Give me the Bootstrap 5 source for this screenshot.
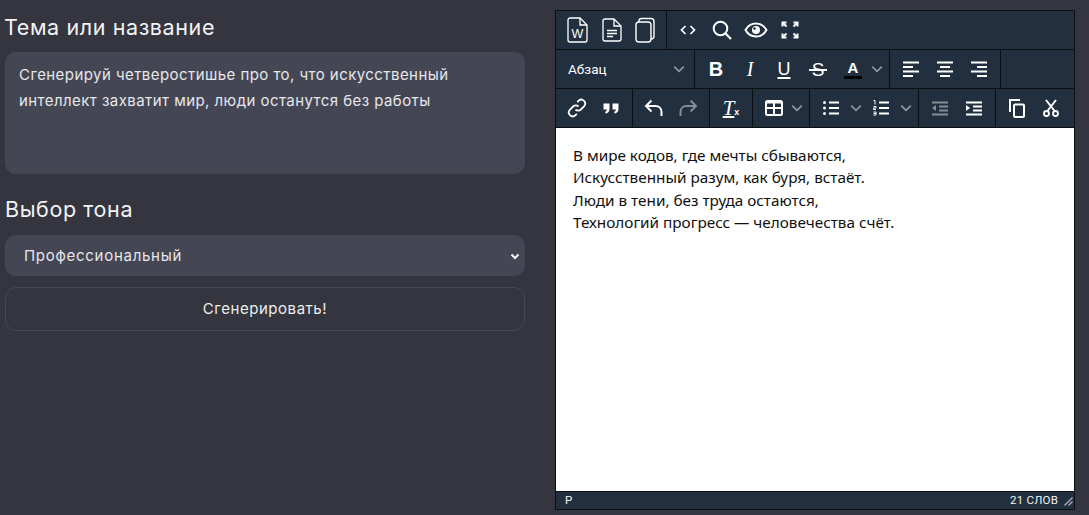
<!DOCTYPE html>
<html lang="ru">
<head>
<meta charset="utf-8">
<title>Генератор</title>
<link href="https://cdn.jsdelivr.net/npm/bootstrap@5.3.0/dist/css/bootstrap.min.css" rel="stylesheet">
<style>
html,body{height:100%;}
body{background:#35353f;font-family:"Inter","Noto Sans",sans-serif;overflow:hidden;}
.page{padding:10px 14px 5px 5px;gap:30px;height:515px;}
.side{flex:0 0 520px;padding-top:5px;}
.side-label{display:block;margin:0 0 12px -1px;color:#f2f3f5;font-size:21.5px;line-height:25px;letter-spacing:.6px;}
.side-label.second{margin:23px 0 13px 0;}
.side .form-control{height:122px;padding:10px 14px;background:#454654;border:0;border-radius:11px;color:#e6e7ea;font-size:15px;line-height:26px;resize:none;box-shadow:none;letter-spacing:.44px;}
.side .form-select{height:41px;padding:2px 30px 0 19px;background-color:#454654;background-image:url("data:image/svg+xml,%3Csvg xmlns='http://www.w3.org/2000/svg' viewBox='0 0 12 12'%3E%3Cpath d='M2.5 4.5 6 8l3.500-3.500' fill='none' stroke='%23fff' stroke-width='2'/%3E%3C/svg%3E");background-position:right 4px center;background-size:12px 12px;border:0;border-radius:11px;color:#e6e7ea;font-size:15px;letter-spacing:.72px;}
.side .go{height:44px;margin-top:11px;background:transparent;border:1px solid #474754;border-radius:11px;color:#eceded;font-size:15px;letter-spacing:.55px;}
.editor{flex:0 0 520px;height:500px;border:1px solid #0b0f14;background:#222f3e;color:#fff;font-family:"Roboto",sans-serif;}
.tbar{height:39px;border-bottom:1px solid #0b0f14;flex:none;}
.tgroup{padding:0 4px;height:100%;border-right:1px solid #0b0f14;}
.tgroup.last{border-right:0;}
.tb{width:34px;height:100%;flex:none;color:#fff;}
.tb.w48{width:48px;}
.tb.w50{width:50px;}
.tb.off{opacity:.45;}
.tb svg{display:block;flex:none;}
.tb .caret{opacity:.5;margin-left:auto;}
.tb.w48,.tb.w50{padding:0 2px 0 5px;}
.fmt{flex:0 0 139px;padding:0 9px 0 12px;border-right:1px solid #0b0f14;font-size:13.5px;}
.fmt .caret{opacity:.5;}
.gl{font-size:17px;line-height:1;font-family:"Liberation Sans",sans-serif;}
.gl.b{font-weight:700;font-size:20px;}
.gl.i{font-family:"Liberation Serif",serif;font-style:italic;font-size:20px;}
.gl.u{font-size:18px;text-decoration:underline;text-decoration-thickness:2px;text-underline-offset:2px;}
.gl.s{position:relative;font-size:19px;}
.gl.s::after{content:"";position:absolute;left:-3px;right:-3px;top:9px;height:2px;background:#fff;}
.gl.a{font-weight:700;font-size:15px;display:block;text-align:center;padding-bottom:1px;width:18px;border-bottom:3px solid #000;}
.gl.t{font-family:"Liberation Serif",serif;font-style:italic;font-size:21px;text-decoration:underline;text-decoration-thickness:2px;text-underline-offset:1px;}
.gl.t small{font-family:"Liberation Sans",sans-serif;font-style:normal;font-weight:700;font-size:9px;display:inline-block;text-decoration:none;}
.doc{flex:1 1 0;background:#fff;color:#101010;padding:16px 17px;font-family:"Noto Sans",sans-serif;font-size:15.3px;line-height:22.4px;min-height:0;}
.doc p{margin:0;}
.status{height:18px;flex:none;padding:0 1px 0 9px;border-top:1px solid #0b0f14;font-size:11.5px;color:#f1f3f5;}
.words{letter-spacing:.2px;margin-right:5px;}
</style>
</head>
<body>
<svg width="0" height="0" class="position-absolute">
<defs>
<symbol id="caret" viewBox="0 0 10 10"><path d="M1 3l4 4 4-4" fill="none" stroke="#fff" stroke-width="1.4"/></symbol>
<symbol id="al" viewBox="0 0 24 24"><path d="M4 5.500h16M4 10h10M4 14.500h16M4 19h10" stroke="#fff" stroke-width="2" fill="none"/></symbol>
<symbol id="ac" viewBox="0 0 24 24"><path d="M4 5.500h16M7 10h10M4 14.500h16M7 19h10" stroke="#fff" stroke-width="2" fill="none"/></symbol>
<symbol id="ar" viewBox="0 0 24 24"><path d="M4 5.500h16M10 10h10M4 14.500h16M10 19h10" stroke="#fff" stroke-width="2" fill="none"/></symbol>
</defs>
</svg>
<div class="page d-flex">
  <form class="side">
    <label class="side-label" for="topic">Тема или название</label>
    <textarea id="topic" class="form-control">Сгенерируй четверостишье про то, что искусственный интеллект захватит мир, люди останутся без работы</textarea>
    <label class="side-label second" for="tone">Выбор тона</label>
    <select id="tone" class="form-select"><option>Профессиональный</option><option>Дружелюбный</option></select>
    <button type="button" class="btn go w-100">Сгенерировать!</button>
  </form>
  <div class="editor d-flex flex-column">
    <div class="tbar d-flex">
      <div class="tgroup d-flex">
        <span class="tb d-flex align-items-center justify-content-center"><svg width="28" height="28" viewBox="0 0 28 28"><path d="M7 2h10l7 7v15a2 2 0 0 1-2 2H7a2 2 0 0 1-2-2V4a2 2 0 0 1 2-2z" fill="none" stroke="#fff" stroke-width="1.3"/><path d="M17 2v7h7" fill="none" stroke="#fff" stroke-width="1.3"/><text x="14.500" y="22" text-anchor="middle" fill="#fff" font-family="Liberation Sans" font-size="12.500">W</text></svg></span>
        <span class="tb d-flex align-items-center justify-content-center"><svg width="28" height="28" viewBox="0 0 28 28"><path d="M8 3h9l7 7v13a2 2 0 0 1-2 2H8a2 2 0 0 1-2-2V5a2 2 0 0 1 2-2z" fill="none" stroke="#fff" stroke-width="1.3"/><path d="M17 3v7h7" fill="none" stroke="#fff" stroke-width="1.3"/><path d="M10 14.500h10M10 17.500h10M10 20.500h6" stroke="#fff" stroke-width="1.300"/></svg></span>
        <span class="tb d-flex align-items-center justify-content-center"><svg width="28" height="28" viewBox="0 0 28 28"><rect x="5" y="6" width="15" height="20" rx="3" fill="none" stroke="#fff" stroke-width="1.4"/><path d="M8 6V5a2.500 2.500 0 0 1 2.500-2.500H20a3 3 0 0 1 3 3V20a3 3 0 0 1-3 3" fill="none" stroke="#fff" stroke-width="1.4"/></svg></span>
      </div>
      <div class="tgroup last d-flex">
        <span class="tb d-flex align-items-center justify-content-center"><svg width="24" height="24" viewBox="0 0 24 24"><path d="M9.500 8l-4 4 4 4M14.500 8l4 4-4 4" fill="none" stroke="#fff" stroke-width="1.700"/></svg></span>
        <span class="tb d-flex align-items-center justify-content-center"><svg width="24" height="24" viewBox="0 0 24 24"><circle cx="10.500" cy="10.500" r="6.800" fill="none" stroke="#fff" stroke-width="2"/><path d="M15.500 15.500l5.500 5.500" stroke="#fff" stroke-width="2.200"/></svg></span>
        <span class="tb d-flex align-items-center justify-content-center"><svg width="24" height="24" viewBox="0 0 24 24"><path d="M1.500 12C4 7.500 7.700 5.500 12 5.500s8 2 10.500 6.500c-2.500 4.500-6.200 6.500-10.500 6.500S4 16.500 1.500 12z" fill="none" stroke="#fff" stroke-width="2"/><circle cx="12" cy="12" r="4" fill="#fff"/><circle cx="10.500" cy="10.500" r="1.300" fill="#222f3e"/></svg></span>
        <span class="tb d-flex align-items-center justify-content-center"><svg width="24" height="24" viewBox="0 0 24 24"><path d="M4.500 8.500v-4h4M19.500 8.500v-4h-4M4.500 15.500v4h4M19.500 15.500v4h-4" fill="none" stroke="#fff" stroke-width="2"/><path d="M5 5l3.500 3.500M19 5l-3.500 3.500M5 19l3.500-3.500M19 19l-3.500-3.500" stroke="#fff" stroke-width="2"/></svg></span>
      </div>
    </div>
    <div class="tbar d-flex">
      <div class="fmt d-flex align-items-center justify-content-between"><span>Абзац</span><svg class="caret" width="12" height="12"><use href="#caret"/></svg></div>
      <div class="tgroup d-flex">
        <span class="tb d-flex align-items-center justify-content-center"><span class="gl b">B</span></span>
        <span class="tb d-flex align-items-center justify-content-center"><span class="gl i">I</span></span>
        <span class="tb d-flex align-items-center justify-content-center"><span class="gl u">U</span></span>
        <span class="tb d-flex align-items-center justify-content-center"><span class="gl s">S</span></span>
        <span class="tb w50 d-flex align-items-center"><span class="gl a ms-1">A</span><svg class="caret" width="12" height="12"><use href="#caret"/></svg></span>
      </div>
      <div class="tgroup d-flex">
        <span class="tb d-flex align-items-center justify-content-center"><svg width="24" height="24"><use href="#al"/></svg></span>
        <span class="tb d-flex align-items-center justify-content-center"><svg width="24" height="24"><use href="#ac"/></svg></span>
        <span class="tb d-flex align-items-center justify-content-center"><svg width="24" height="24"><use href="#ar"/></svg></span>
      </div>
    </div>
    <div class="tbar d-flex">
      <div class="tgroup d-flex">
        <span class="tb d-flex align-items-center justify-content-center"><svg width="24" height="24" viewBox="0 0 24 24"><path d="M10.500 13.500a3.800 3.800 0 0 0 5.400 0l3.300-3.300a3.900 3.900 0 0 0-5.500-5.500l-1.500 1.500M13.500 10.500a3.800 3.800 0 0 0-5.400 0l-3.300 3.300a3.900 3.900 0 0 0 5.500 5.500l1.500-1.500" fill="none" stroke="#fff" stroke-width="1.800"/></svg></span>
        <span class="tb d-flex align-items-center justify-content-center"><svg width="24" height="24" viewBox="0 0 24 24"><path d="M4.500 7.500h6v5.500c0 2.500-1.500 4-3.700 4.500l-.8-1.500c1.200-.4 1.800-1.200 1.900-2.500H4.500zM13.500 7.500h6v5.500c0 2.500-1.500 4-3.700 4.500l-.8-1.500c1.200-.4 1.800-1.200 1.900-2.500h-3.400z" fill="#fff"/></svg></span>
      </div>
      <div class="tgroup d-flex">
        <span class="tb d-flex align-items-center justify-content-center"><svg width="24" height="24" viewBox="0 0 24 24"><path d="M9.500 4.500L4 10l5.500 5.500M4 10h9.500c3.500 0 6 2.500 6 6v4" fill="none" stroke="#fff" stroke-width="2"/></svg></span>
        <span class="tb off d-flex align-items-center justify-content-center"><svg width="24" height="24" viewBox="0 0 24 24"><path d="M14.500 4.500L20 10l-5.500 5.500M20 10h-9.500c-3.500 0-6 2.500-6 6v4" fill="none" stroke="#fff" stroke-width="2"/></svg></span>
      </div>
      <div class="tgroup d-flex">
        <span class="tb d-flex align-items-center justify-content-center"><span class="gl t">T<small>x</small></span></span>
      </div>
      <div class="tgroup d-flex">
        <span class="tb w48 d-flex align-items-center"><svg width="24" height="24" viewBox="0 0 24 24"><rect x="4" y="5" width="16" height="14" rx="1.500" fill="none" stroke="#fff" stroke-width="2"/><path d="M4 12h16M12 7v12M4 6.500h16" stroke="#fff" stroke-width="2"/></svg><svg class="caret" width="12" height="12"><use href="#caret"/></svg></span>
      </div>
      <div class="tgroup d-flex">
        <span class="tb w50 d-flex align-items-center"><svg width="24" height="24" viewBox="0 0 24 24"><path d="M10 6.500h10M10 12h10M10 17.500h10" stroke="#fff" stroke-width="2"/><circle cx="5.500" cy="6.500" r="1.500" fill="#fff"/><circle cx="5.500" cy="12" r="1.500" fill="#fff"/><circle cx="5.500" cy="17.500" r="1.500" fill="#fff"/></svg><svg class="caret" width="12" height="12"><use href="#caret"/></svg></span>
        <span class="tb w50 d-flex align-items-center"><svg width="24" height="24" viewBox="0 0 24 24"><path d="M10 6.500h10M10 12h10M10 17.500h10" stroke="#fff" stroke-width="2"/><path d="M4.500 4.500h1.500v4M4.500 10.500H7v1.500H4.500v1.500H7M4.500 16H7v3H4.500M4.500 17.500H7" fill="none" stroke="#fff" stroke-width="1"/></svg><svg class="caret" width="12" height="12"><use href="#caret"/></svg></span>
      </div>
      <div class="tgroup d-flex">
        <span class="tb off d-flex align-items-center justify-content-center"><svg width="24" height="24" viewBox="0 0 24 24"><path d="M4 6.500h16M11 10.500h9M11 14.500h9M4 18.500h16" stroke="#fff" stroke-width="2"/><path d="M8 9v6l-4-3z" fill="#fff"/></svg></span>
        <span class="tb d-flex align-items-center justify-content-center"><svg width="24" height="24" viewBox="0 0 24 24"><path d="M4 6.500h16M11 10.500h9M11 14.500h9M4 18.500h16" stroke="#fff" stroke-width="2"/><path d="M4 9v6l4-3z" fill="#fff"/></svg></span>
      </div>
      <div class="tgroup last d-flex">
        <span class="tb d-flex align-items-center justify-content-center"><svg width="24" height="24" viewBox="0 0 24 24"><path d="M5 16V4h10" fill="none" stroke="#fff" stroke-width="2"/><rect x="9" y="8.500" width="10" height="12.500" rx="1" fill="none" stroke="#fff" stroke-width="2"/></svg></span>
        <span class="tb d-flex align-items-center justify-content-center"><svg width="24" height="24" viewBox="0 0 24 24"><path d="M7 4l9 11.500M17 4L8 15.500" stroke="#fff" stroke-width="2" fill="none"/><circle cx="7.500" cy="17.500" r="2.500" fill="none" stroke="#fff" stroke-width="1.800"/><circle cx="16.500" cy="17.500" r="2.500" fill="none" stroke="#fff" stroke-width="1.800"/></svg></span>
      </div>
    </div>
    <div class="doc">
      <p>В мире кодов, где мечты сбываются,</p>
      <p>Искусственный разум, как буря, встаёт.</p>
      <p>Люди в тени, без труда остаются,</p>
      <p>Технологий прогресс — человечества счёт.</p>
    </div>
    <div class="status d-flex align-items-center justify-content-between">
      <span>P</span>
      <span class="d-flex align-items-center"><span class="words">21 СЛОВ</span><svg width="10" height="10" viewBox="0 0 10 10"><path d="M9.500 1.500L1.500 9.500M9.500 5.500L5.500 9.500" stroke="#aab2bb" stroke-width="1.300"/></svg></span>
    </div>
  </div>
</div>
<script src="https://cdn.jsdelivr.net/npm/bootstrap@5.3.0/dist/js/bootstrap.bundle.min.js"></script>
</body>
</html>
